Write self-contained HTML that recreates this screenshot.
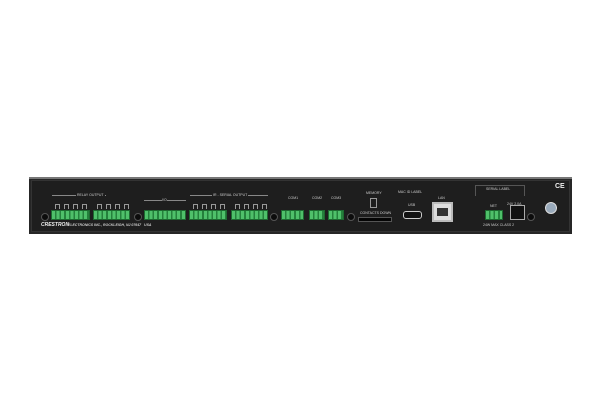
<!DOCTYPE html><html><head><style>
body{margin:0;width:600px;height:410px;background:#fff;position:relative;overflow:hidden;font-family:"Liberation Sans",sans-serif}
.a{position:absolute}
.g{position:absolute;background:#2f9a4a;border:1px solid #1d6a30;box-sizing:border-box;height:10px;top:210px;background-image:repeating-linear-gradient(90deg,#4fc06a 0 3px,#25803c 3px 4.6px)}
.s{position:absolute;width:6px;height:6px;border-radius:50%;background:#0c0c0c;border:1px solid #555;top:213px}
.t{position:absolute;color:#ccc;font-size:3.5px;white-space:nowrap}
.p{position:absolute;width:3px;height:4px;border:1px solid #999;border-bottom:none;top:204px}
</style></head><body>
<div class="a" style="left:29px;top:177px;width:543px;height:57px;background:#262626;border-top:2px solid #777;box-sizing:border-box"></div>
<div class="a" style="left:31px;top:180px;width:539px;height:52px;background:#1e1e1e;border:1px solid #333;box-sizing:border-box"></div>
<div class="s" style="left:41px"></div><div class="s" style="left:134px"></div><div class="s" style="left:270px"></div><div class="s" style="left:347px"></div><div class="s" style="left:527px"></div>
<div class="g" style="left:51px;width:39px"></div><div class="g" style="left:93px;width:37px"></div>
<div class="g" style="left:144px;width:42px"></div>
<div class="g" style="left:189px;width:38px"></div><div class="g" style="left:231px;width:37px"></div>
<div class="g" style="left:281px;width:23px"></div><div class="g" style="left:309px;width:16px"></div><div class="g" style="left:328px;width:16px"></div>
<div class="g" style="left:485px;width:18px"></div>
<div class="a" style="left:52px;top:195px;width:54px;height:1px;background:#888"></div><div class="t" style="left:76px;top:193px;background:#1e1e1e;padding:0 1px">RELAY OUTPUT</div>
<div class="a" style="left:144px;top:200px;width:42px;height:1px;background:#888"></div><div class="t" style="left:162px;top:198px;background:#1e1e1e">I/O</div>
<div class="a" style="left:190px;top:195px;width:78px;height:1px;background:#888"></div><div class="t" style="left:212px;top:193px;background:#1e1e1e;padding:0 1px">IR - SERIAL OUTPUT</div>
<div class="p" style="left:55px"></div><div class="p" style="left:64px"></div><div class="p" style="left:73px"></div><div class="p" style="left:82px"></div>
<div class="p" style="left:97px"></div><div class="p" style="left:106px"></div><div class="p" style="left:115px"></div><div class="p" style="left:124px"></div>
<div class="p" style="left:193px"></div><div class="p" style="left:202px"></div><div class="p" style="left:211px"></div><div class="p" style="left:220px"></div>
<div class="p" style="left:235px"></div><div class="p" style="left:244px"></div><div class="p" style="left:253px"></div><div class="p" style="left:262px"></div>
<div class="t" style="left:288px;top:196px">COM1</div><div class="t" style="left:312px;top:196px">COM2</div><div class="t" style="left:331px;top:196px">COM3</div>
<div class="t" style="left:366px;top:191px">MEMORY</div>
<div class="a" style="left:370px;top:198px;width:5px;height:8px;border:1px solid #999"></div>
<div class="t" style="left:360px;top:211px">CONTACTS DOWN</div>
<div class="a" style="left:358px;top:217px;width:32px;height:3px;background:#050505;border:1px solid #555"></div>
<div class="t" style="left:398px;top:190px">MAC ID LABEL</div>
<div class="t" style="left:408px;top:203px">USB</div>
<div class="a" style="left:403px;top:211px;width:19px;height:8px;border:1px solid #ccc;border-radius:3px;background:#111;box-sizing:border-box"></div>
<div class="t" style="left:438px;top:196px">LAN</div>
<div class="a" style="left:432px;top:202px;width:21px;height:20px;background:#ddd;box-sizing:border-box;border:2px solid #bbb"><div class="a" style="left:3px;top:4px;width:11px;height:8px;background:#333"></div></div>
<div class="a" style="left:475px;top:185px;width:48px;height:10px;border:1px solid #555;border-bottom:none"></div>
<div class="t" style="left:486px;top:187px">SERIAL LABEL</div>
<div class="t" style="left:490px;top:204px">NET</div><div class="t" style="left:507px;top:202px">24V 2.0A</div>
<div class="a" style="left:510px;top:205px;width:15px;height:15px;background:#111;border:1px solid #aaa;box-sizing:border-box"></div>
<div class="t" style="left:483px;top:223px">24W MAX CLASS 2</div>
<div class="a" style="left:545px;top:202px;width:12px;height:12px;border-radius:50%;background:#9ab;border:1px solid #ddd;box-sizing:border-box"></div>
<div class="a" style="left:555px;top:183px;color:#eee;font-size:7px;font-weight:bold">CE</div>
<div class="a" style="left:41px;top:222px;color:#eee;font-size:5px;font-weight:bold;font-style:italic">CRESTRON</div>
<div class="t" style="left:68px;top:223px;font-style:italic;font-weight:bold">ELECTRONICS INC., ROCKLEIGH, NJ 07647 &nbsp; USA</div>
</body></html>
